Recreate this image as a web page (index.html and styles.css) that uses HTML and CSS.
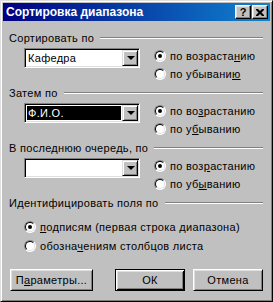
FILE: index.html
```html
<!DOCTYPE html>
<html lang="ru">
<head>
    <meta charset="UTF-8">
    <title>Сортировка диапазона</title>
    <link rel="stylesheet" href="styles.css">
</head>
<body>
    <div class="window">
        <div class="titlebar">
            <span class="title">Сортировка диапазона</span>
            <div class="title-buttons">
                <span class="tbtn help">?</span>
                <span class="tbtn close">
                    <svg width="8" height="7" viewBox="0 0 8 7">
                        <path d="M0 0h2l2 2 2-2h2v1l-2.5 2.5L8 6v1H6L4 5 2 7H0V6l2.5-2.5L0 1z" fill="#000"/>
                    </svg>
                </span>
            </div>
        </div>

        <div class="body">
            <div class="group">
                <div class="group-head"><span>Сортировать по</span><span class="rule"></span></div>
                <div class="group-row">
                    <div class="combo">
                        <span class="combo-text">Кафедра</span>
                        <span class="combo-btn"><span class="arrow"></span></span>
                    </div>
                    <div class="radios">
                        <div class="radio checked"><span class="circle"></span><span>по возраста<u>н</u>ию</span></div>
                        <div class="radio"><span class="circle"></span><span>по убывани<u>ю</u></span></div>
                    </div>
                </div>
            </div>

            <div class="group">
                <div class="group-head"><span>Затем по</span><span class="rule"></span></div>
                <div class="group-row">
                    <div class="combo">
                        <span class="combo-text selected">Ф.И.О.</span>
                        <span class="combo-btn"><span class="arrow"></span></span>
                    </div>
                    <div class="radios">
                        <div class="radio checked"><span class="circle"></span><span>по во<u>з</u>растанию</span></div>
                        <div class="radio"><span class="circle"></span><span>по у<u>б</u>ыванию</span></div>
                    </div>
                </div>
            </div>

            <div class="group">
                <div class="group-head"><span>В последнюю очередь, по</span><span class="rule"></span></div>
                <div class="group-row">
                    <div class="combo">
                        <span class="combo-text"></span>
                        <span class="combo-btn"><span class="arrow"></span></span>
                    </div>
                    <div class="radios">
                        <div class="radio checked"><span class="circle"></span><span>по воз<u>р</u>астанию</span></div>
                        <div class="radio"><span class="circle"></span><span>по уб<u>ы</u>ванию</span></div>
                    </div>
                </div>
            </div>

            <div class="group-head"><span>Идентифицировать поля по</span><span class="rule"></span></div>
            <div class="radio-list">
                <div class="radio checked"><span class="circle"></span><span><u>п</u>одписям (первая строка диапазона)</span></div>
                <div class="radio"><span class="circle"></span><span>обозна<u>ч</u>ениям столбцов листа</span></div>
            </div>

            <div class="buttons">
                <button class="btn wide">П<u>а</u>раметры...</button>
                <div class="btn-pair">
                    <button class="btn default">ОК</button>
                    <button class="btn">Отмена</button>
                </div>
            </div>
        </div>
    </div>
</body>
</html>
```

FILE: styles.css
```css
body {
    margin: 0;
    padding: 0;
    font-family: "Liberation Sans", Arial, sans-serif;
    font-size: 11px;
    letter-spacing: 0.3px;
    color: #000;
    background: #c0c0c0;
}

.window {
    width: 273px;
    height: 302px;
    box-sizing: border-box;
    background: #c0c0c0;
    border: 1px solid;
    border-color: #dfdfdf #000 #000 #dfdfdf;
    box-shadow: inset 1px 1px #fff, inset -1px -1px #808080;
    padding: 2px;
    display: flex;
    flex-direction: column;
}

.titlebar {
    height: 18px;
    display: flex;
    align-items: center;
    justify-content: space-between;
    padding: 0 2px 0 3px;
    background: linear-gradient(to right, #000080, #1084d0);
    color: #fff;
}

.title {
    font-weight: bold;
    font-size: 12px;
    letter-spacing: 0;
}

.title-buttons {
    display: flex;
    gap: 1px;
}

.tbtn {
    width: 16px;
    height: 14px;
    box-sizing: border-box;
    background: #c0c0c0;
    border: 1px solid;
    border-color: #fff #000 #000 #fff;
    box-shadow: inset -1px -1px #808080, inset 1px 1px #dfdfdf;
    display: flex;
    align-items: center;
    justify-content: center;
    color: #000;
    font-weight: bold;
    font-size: 11px;
    letter-spacing: 0;
    line-height: 1;
}

.body {
    padding: 10px 7px 0 6px;
}

.group-head {
    height: 13px;
    display: flex;
    align-items: center;
    white-space: nowrap;
}

.rule {
    flex: 1;
    height: 0;
    margin-left: 6px;
    border-top: 1px solid #808080;
    border-bottom: 1px solid #fff;
}

.group-row {
    display: flex;
    height: 36px;
    margin: 3px 0;
}

.combo {
    width: 116px;
    height: 20px;
    box-sizing: border-box;
    margin: 1px 0 0 15px;
    border: 1px solid;
    border-color: #808080 #fff #fff #808080;
    box-shadow: inset 1px 1px #000, inset -1px -1px #dfdfdf;
    padding: 2px;
    background: #fff;
    display: flex;
}

.combo-text {
    flex: 1;
    line-height: 14px;
    padding-left: 1px;
}

.combo-text.selected {
    background: #000;
    color: #fff;
    margin-right: 1px;
}

.combo-btn {
    width: 16px;
    height: 16px;
    margin: -1px -1px 0 0;
    box-sizing: border-box;
    background: #c0c0c0;
    border: 1px solid;
    border-color: #dfdfdf #000 #000 #dfdfdf;
    box-shadow: inset 1px 1px #fff, inset -1px -1px #808080;
    display: flex;
    align-items: center;
    justify-content: center;
}

.arrow {
    width: 0;
    height: 0;
    border-left: 4px solid transparent;
    border-right: 4px solid transparent;
    border-top: 4px solid #000;
    margin-left: 1px;
}

.radios {
    margin-left: 14px;
}

.radio {
    display: flex;
    align-items: center;
    height: 18px;
    gap: 4px;
    white-space: nowrap;
}

.circle {
    position: relative;
    flex: none;
    width: 12px;
    height: 12px;
    box-sizing: border-box;
    border-radius: 50%;
    border: 1px solid;
    border-color: #808080 #fff #fff #808080;
    background: #fff;
}

.circle::before {
    content: "";
    position: absolute;
    inset: 0;
    box-sizing: border-box;
    border-radius: 50%;
    border: 1px solid;
    border-color: #000 #dfdfdf #dfdfdf #000;
}

.checked .circle::after {
    content: "";
    position: absolute;
    left: 3px;
    top: 3px;
    width: 4px;
    height: 4px;
    border-radius: 50%;
    background: #000;
}

.radio-list {
    margin: 8px 0 0 15px;
}

.radio-list .radio {
    height: 19px;
}

.buttons {
    display: flex;
    justify-content: space-between;
    margin-top: 14px;
    padding-left: 1px;
}

.btn-pair {
    display: flex;
    gap: 8px;
}

.btn {
    width: 70px;
    height: 22px;
    box-sizing: border-box;
    padding: 0;
    font-family: "Liberation Sans", Arial, sans-serif;
    font-size: 11px;
    letter-spacing: 0.3px;
    color: #000;
    background: #c0c0c0;
    border: 1px solid;
    border-color: #fff #000 #000 #fff;
    box-shadow: inset 1px 1px #dfdfdf, inset -1px -1px #808080;
}

.btn.wide {
    width: 83px;
}

.btn.default {
    border-color: #000;
    box-shadow: inset 1px 1px #fff, inset -1px -1px #000, inset 2px 2px #dfdfdf, inset -2px -2px #808080;
}
```
